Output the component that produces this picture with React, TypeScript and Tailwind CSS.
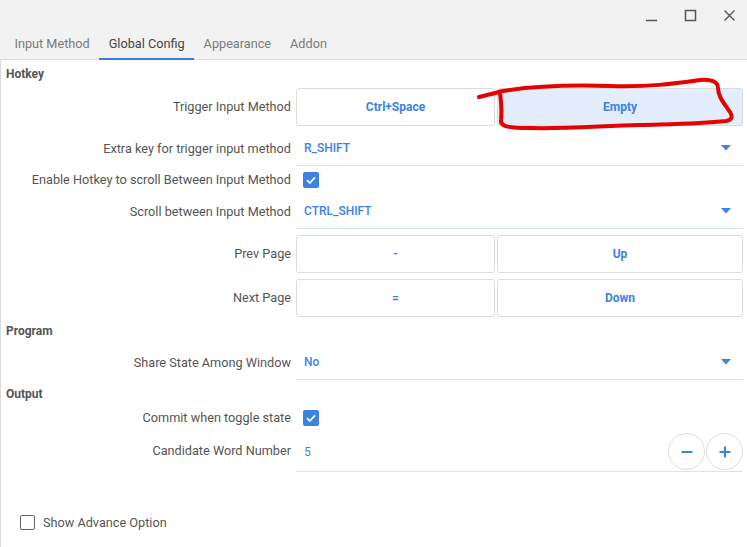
import React from 'react'

const font = { fontFamily: 'Roboto, "Liberation Sans", sans-serif' }

function Label({ children }: { children: React.ReactNode }) {
  return <div className="w-[290px] shrink-0 text-right text-[12.7px] text-[#555]">{children}</div>
}

function KeyButton({ text, wide, active }: { text: string; wide?: boolean; active?: boolean }) {
  return (
    <button
      className={`h-[38px] ${wide ? 'flex-1' : 'w-[199px]'} rounded-[3px] border border-[#dcdcdc] ${active ? 'bg-[#e3edfb]' : 'bg-white'} text-[12px] font-bold text-[#3b82e4]`}
    >
      {text}
    </button>
  )
}

function Check({ checked }: { checked: boolean }) {
  return checked ? (
    <span className="flex h-4 w-4 items-center justify-center rounded-[2px] bg-[#3b82e4]">
      <svg width="12" height="12" viewBox="0 0 12 12">
        <path d="M2 6.2 L4.8 9 L10 3.4" fill="none" stroke="white" strokeWidth="1.8" />
      </svg>
    </span>
  ) : (
    <span className="block h-[15px] w-[15px] rounded-[2px] border-[1.5px] border-[#666] bg-white" />
  )
}

function Select({ value, h = 'h-[34px]' }: { value: string; h?: string }) {
  return (
    <div className={`ml-[5px] mr-[4px] flex ${h} flex-1 items-center justify-between border-b border-[#d6e4f7] pl-[8px] pr-[12px]`}>
      <span className="text-[12px] font-medium text-[#3b82e4]">{value}</span>
      <svg width="10" height="6" viewBox="0 0 10 6">
        <path d="M0 0 H10 L5 5.5 Z" fill="#3b82e4" />
      </svg>
    </div>
  )
}

function Section({ title, h }: { title: string; h: string }) {
  return <div className={`flex ${h} items-center pl-[5px] text-[12px] font-bold text-[#555]`}>{title}</div>
}

export default function App() {
  const tabs = ['Input Method', 'Global Config', 'Appearance', 'Addon']
  return (
    <div className="relative h-[547px] w-[747px] overflow-hidden bg-white" style={font}>
      {/* title + tabs */}
      <div className="h-[60px] border-b border-[#dedede] bg-[#f2f2f2]">
        <div className="flex h-[30px] items-center justify-end gap-[26px] pr-[11px] text-[#555]">
          <svg width="13" height="13" viewBox="0 0 13 13">
            <path d="M1 11.5 H12" stroke="#555" strokeWidth="1.5" />
          </svg>
          <svg width="13" height="13" viewBox="0 0 13 13">
            <rect x="1.5" y="1.5" width="10" height="10" fill="none" stroke="#555" strokeWidth="1.5" />
          </svg>
          <svg width="13" height="13" viewBox="0 0 13 13">
            <path d="M1.5 1.5 L11.5 11.5 M11.5 1.5 L1.5 11.5" stroke="#555" strokeWidth="1.4" />
          </svg>
        </div>
        <div className="flex h-[30px] pl-[5px]">
          {tabs.map(t => (
            <div
              key={t}
              className={`flex items-center px-[9.5px] text-[12.7px] ${
                t === 'Global Config' ? 'border-b-[2px] border-[#3b7fdc] text-[#444]' : 'border-b-[2px] border-transparent text-[#7a7a7a]'
              }`}
            >
              {t}
            </div>
          ))}
        </div>
      </div>

      <div className="h-[487px] border-l border-[#dadada]">
        <Section title="Hotkey" h="h-[27px]" />
        <div className="mt-[1px] flex items-center">
          <Label>Trigger Input Method</Label>
          <div className="ml-[5px] mr-[4px] flex flex-1 gap-[2px]">
            <KeyButton text="Ctrl+Space" />
            <KeyButton text="Empty" wide active />
          </div>
        </div>
        <div className="mt-[5px] flex items-center">
          <Label>Extra key for trigger input method</Label>
          <Select value="R_SHIFT" h="h-[35px]" />
        </div>
        <div className="flex h-[28px] items-center">
          <Label>Enable Hotkey to scroll Between Input Method</Label>
          <div className="ml-[12px]">
            <Check checked />
          </div>
        </div>
        <div className="flex items-center">
          <Label>Scroll between Input Method</Label>
          <Select value="CTRL_SHIFT" h="h-[35px]" />
        </div>
        <div className="mt-[6px] flex items-center">
          <Label>Prev Page</Label>
          <div className="ml-[5px] mr-[4px] flex flex-1 gap-[2px]">
            <KeyButton text="-" />
            <KeyButton text="Up" wide />
          </div>
        </div>
        <div className="mt-[6px] flex items-center">
          <Label>Next Page</Label>
          <div className="ml-[5px] mr-[4px] flex flex-1 gap-[2px]">
            <KeyButton text="=" />
            <KeyButton text="Down" wide />
          </div>
        </div>
        <Section title="Program" h="h-[28px]" />
        <div className="flex items-center">
          <Label>Share State Among Window</Label>
          <Select value="No" h="h-[35px]" />
        </div>
        <Section title="Output" h="h-[27px]" />
        <div className="flex h-[22px] items-center">
          <Label>Commit when toggle state</Label>
          <div className="ml-[12px]">
            <Check checked />
          </div>
        </div>
        <div className="flex items-center">
          <Label>Candidate Word Number</Label>
          <div className="ml-[5px] mr-[4px] flex h-[43px] flex-1 items-center justify-between border-b border-[#d6e4f7] pl-[8px] pt-[3px]">
            <span className="text-[12px] text-[#3b82e4]">5</span>
            <div className="flex gap-[1px] self-end pb-[1px]">
              <button className="flex h-[37px] w-[37px] items-center justify-center rounded-full border border-[#dcdcdc] bg-white">
                <svg width="14" height="14" viewBox="0 0 14 14">
                  <path d="M1.5 7 H12.5" stroke="#3b82e4" strokeWidth="2" />
                </svg>
              </button>
              <button className="flex h-[37px] w-[37px] items-center justify-center rounded-full border border-[#dcdcdc] bg-white">
                <svg width="14" height="14" viewBox="0 0 14 14">
                  <path d="M1.5 7 H12.5 M7 1.5 V12.5" stroke="#3b82e4" strokeWidth="2" />
                </svg>
              </button>
            </div>
          </div>
        </div>
        <div className="mt-[41px] flex items-center gap-[8px] pl-[19px]">
          <Check checked={false} />
          <span className="text-[12.7px] text-[#555]">Show Advance Option</span>
        </div>
      </div>

      {/* red annotation scribble */}
      <svg className="pointer-events-none absolute left-0 top-0" width="747" height="547" viewBox="0 0 747 547">
        <path
          d="M479 97 C488 95 495 93 503 91 C540 85 575 85 610 86 C650 87 672 84 700 80 C712 79 718 82 718 88 C718 96 723 102 730 112 C733 117 732 120 726 121 C700 124 675 124 640 125 C600 126 565 129 530 128 C510 128 500 127 501 120 C502 110 501 100 500 92"
          fill="none"
          stroke="#e60000"
          strokeWidth="4"
          strokeLinecap="round"
          strokeLinejoin="round"
        />
      </svg>
    </div>
  )
}
